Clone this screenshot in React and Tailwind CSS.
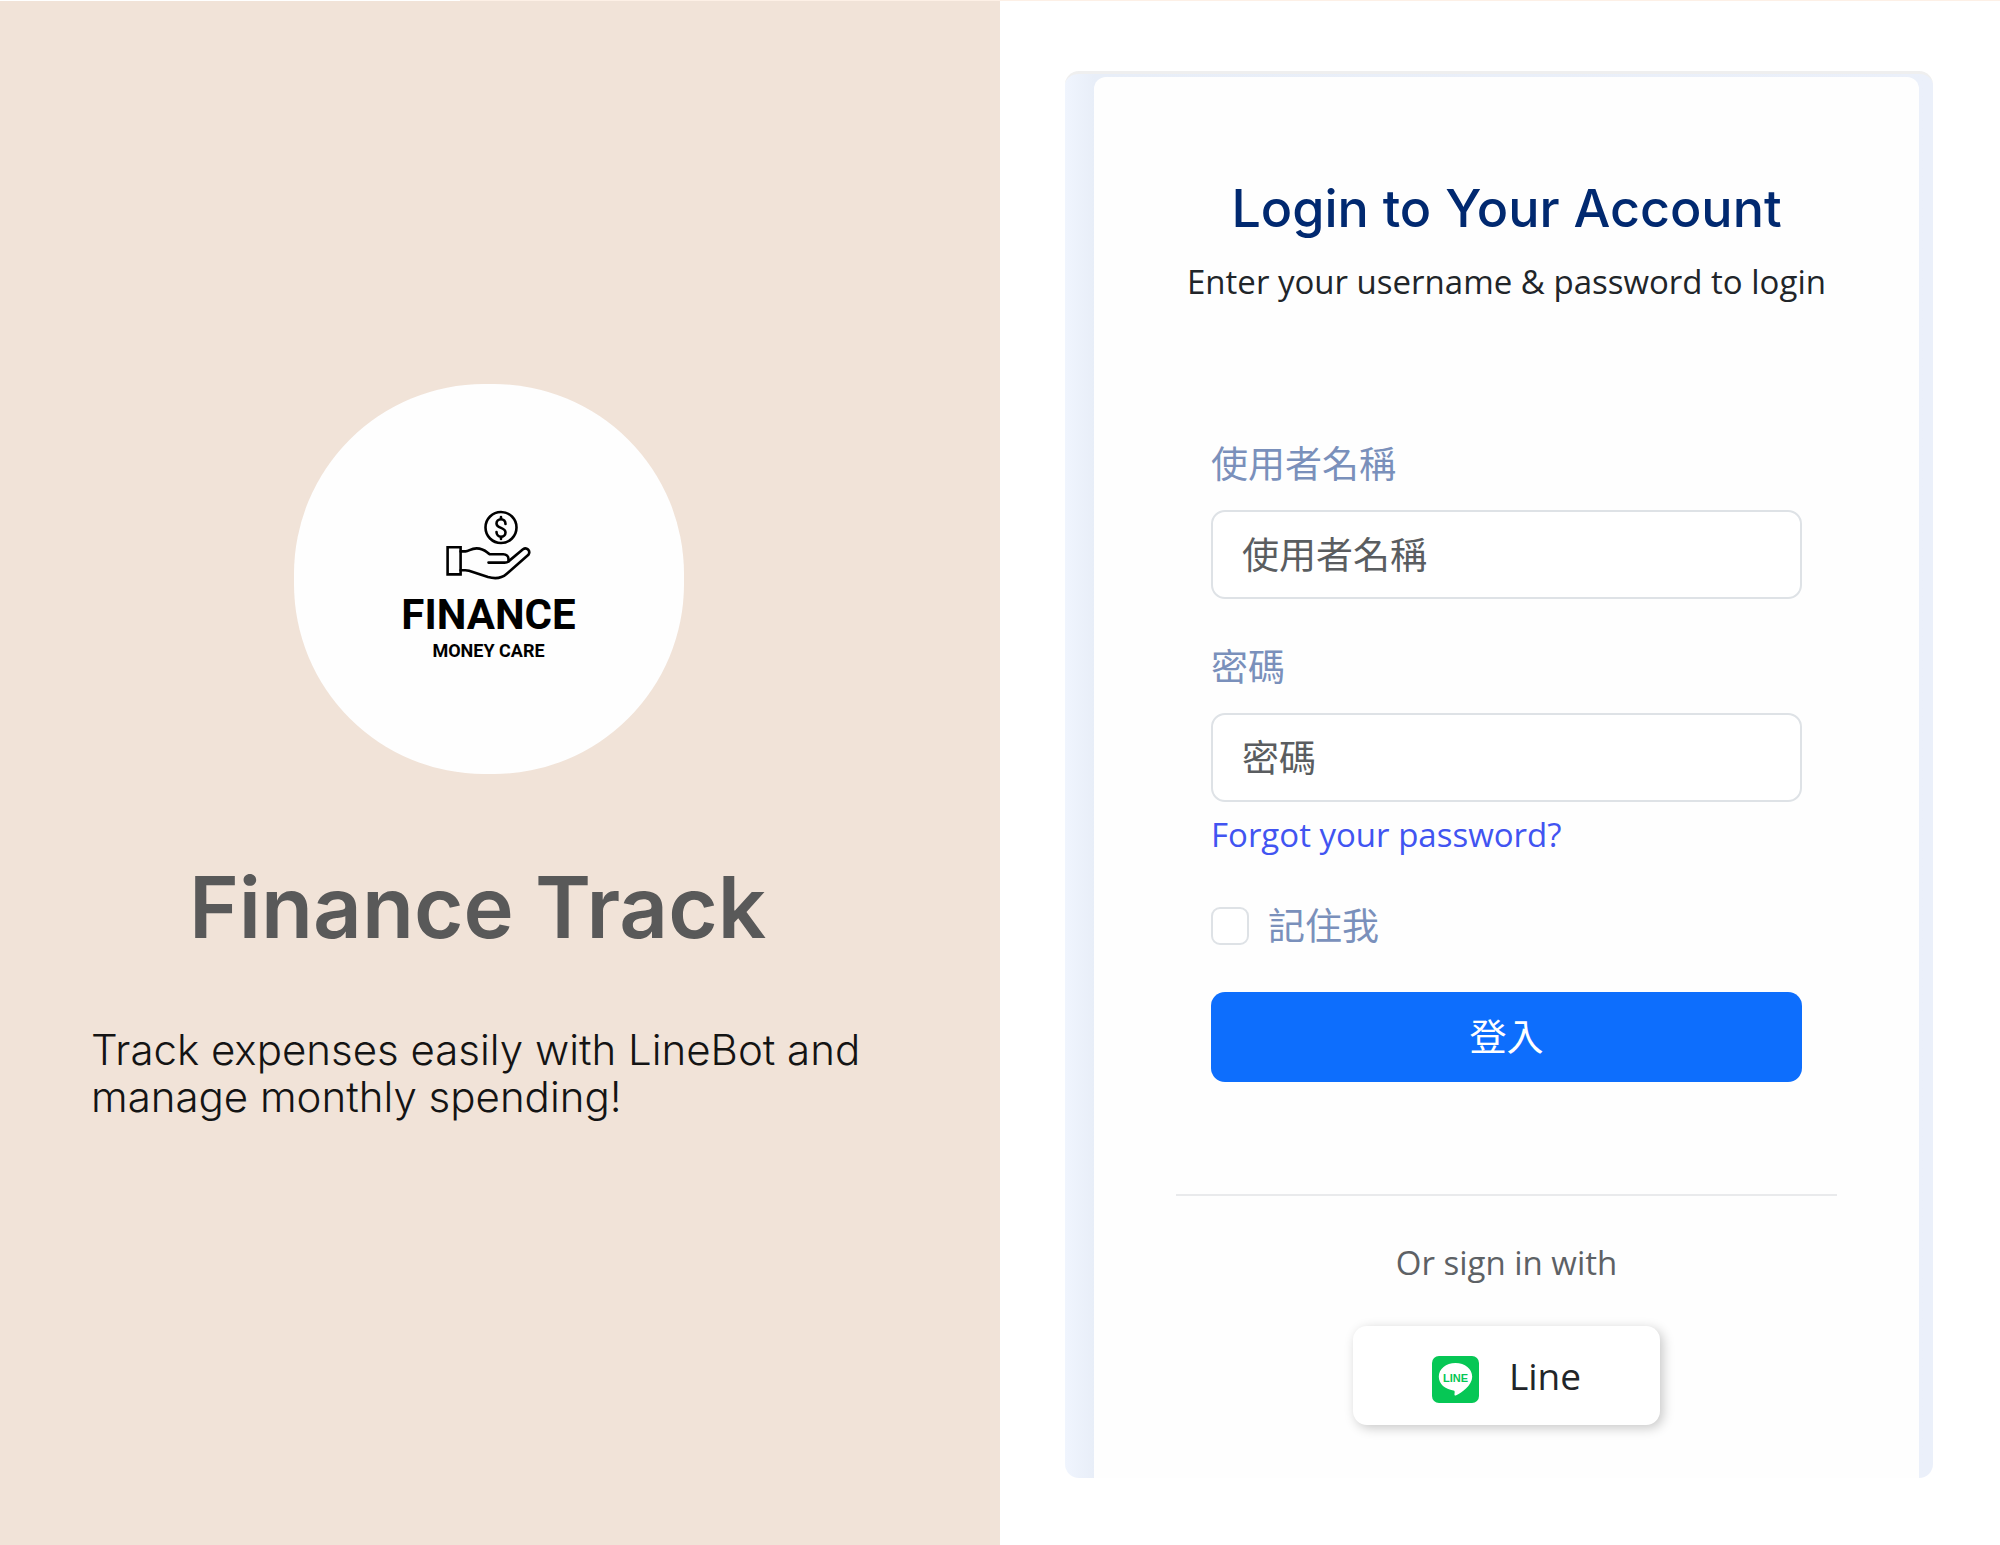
import React from "react";

const cjk = "font-['Open_Sans','Noto_Sans_CJK_TC',sans-serif]";

function HandCoinIcon() {
  return (
    <svg
      className="h-[70px] w-[86px]"
      viewBox="0 0 86 70"
      fill="none"
      stroke="#000"
      strokeWidth="2.6"
      strokeLinejoin="round"
      strokeLinecap="round"
      aria-hidden="true"
    >
      <circle cx="55" cy="17.500" r="15.5" />
      <path d="M59.5 14c0-3-2-4.800-4.500-4.800s-4.500 1.700-4.500 4.200c0 5.200 9 3.800 9 9 0 2.500-2 4.300-4.500 4.300s-4.500-1.800-4.500-4.700" />
      <path d="M55 7v2M55 27v2" />
      <path d="M1.600 37.200h13v27.200h-13z" strokeLinejoin="miter" />
      <path d="M14.600 41.400h5c3.500 0 5-3 11-3 7 0 9.400 3.200 13 5.800h13.600c3.400 0 5.300 2.300 5.300 5v2.200c-1 .9-2.400 1.200-4 1.200H42.500" />
      <path d="M62.500 51.400 77 39.200c3.600-2.600 8 1.600 5.400 5.600L60.500 64c-5 4.400-12 4.800-18.500 3L23 60.700c-1.400-.4-2.400-.5-3.800-.5h-4.600" />
    </svg>
  );
}

function LineLogo() {
  return (
    <svg className="mt-[8px] h-[47px] w-[47px]" viewBox="0 0 47 47" aria-hidden="true">
      <rect width="47" height="47" rx="7" fill="#06c755" />
      <path
        d="M23.500 7C14 7 6.800 13 6.800 20.800c0 7.200 6.400 12.600 14.600 13.600 1.500.3 1.400 1.200 1.100 3.400-.2 1.400.3 2.200 1.700 1.500C29 37 40.200 29.800 40.200 20.800 40.200 13 33 7 23.500 7z"
        fill="#fff"
      />
      <text
        x="23.500"
        y="25.500"
        textAnchor="middle"
        fontFamily="Liberation Sans, sans-serif"
        fontWeight="700"
        fontSize="11"
        fill="#06c755"
      >
        LINE
      </text>
    </svg>
  );
}

function Field({ id, label, type }) {
  return (
    <div>
      <label htmlFor={id} className="block text-[37px] leading-[56px] text-[#7a90bb]">
        {label}
      </label>
      <input
        id={id}
        type={type}
        placeholder={label}
        className="mt-[18px] block h-[89px] w-full rounded-[14px] border-2 border-[#dee2e6] bg-white px-[29px] text-[37px] text-[#212529] placeholder:text-[#5a5d60]"
      />
    </div>
  );
}

function Intro() {
  return (
    <section className="flex w-1/2 flex-col items-center bg-[#f1e3d8] pl-[91px] pr-[114px] pt-[383px] font-['Inter',sans-serif]">
      <div className="flex h-[390px] w-[390px] flex-col items-center rounded-[190px] bg-[#fefefe] pt-[126px] font-['Roboto',sans-serif] font-bold text-black">
        <HandCoinIcon />
        <span className="mt-[11px] text-[42px] leading-[48px]">FINANCE</span>
        <span className="text-[18px] leading-[24px]">MONEY CARE</span>
      </div>
      <h1 className="mt-[84px] w-full pr-[22px] text-center text-[85px] font-semibold leading-[100px] text-[#595959]">
        Finance Track
      </h1>
      <p className="mt-[68px] w-full text-[42px] font-light leading-[47px] text-[#141414]">
        Track expenses easily with LineBot and manage monthly spending!
      </p>
    </section>
  );
}

function Login() {
  return (
    <section className="flex-1 bg-white pb-[67px] pl-[65px] pr-[67px] pt-[70px]">
      <div className="flex h-full flex-col rounded-[14px] border-t-[3px] border-[#efefef] bg-[linear-gradient(90deg,#f0f5fe_0px,#e8eef8_29px,#ebf0fa_100%)] pl-[29px] pr-[14px] pt-[3px]">
        <form
          className={`flex flex-1 flex-col rounded-t-[12px] bg-[#fefefe] px-[82px] pt-[94px] ${cjk}`}
          onSubmit={(e) => e.preventDefault()}
        >
          <h2 className="text-center font-['Inter',sans-serif] text-[52px] font-medium leading-[76px] text-[#012970]">
            Login to Your Account
          </h2>
          <p className="mt-[2px] text-center text-[33px] leading-[66px] text-[#212529]">
            Enter your username &amp; password to login
          </p>
          <div className="flex flex-col px-[35px] pt-[121px]">
            <Field id="username" label="使用者名稱" type="text" />
            <div className="mt-[40px]">
              <Field id="password" label="密碼" type="password" />
            </div>
            <a href="#forgot" className="mt-[7px] self-start text-[33px] leading-[52px] text-[#4154f1]">
              Forgot your password?
            </a>
            <div className="mt-[37px] flex items-center gap-[19px]">
              <input
                id="remember"
                type="checkbox"
                className="h-[38px] w-[38px] appearance-none rounded-[9px] border-2 border-[#dee2e6] bg-white checked:bg-[#0d6efd]"
              />
              <label htmlFor="remember" className="text-[37px] leading-[56px] text-[#7a90bb]">
                記住我
              </label>
            </div>
            <button
              type="submit"
              className="mt-[38px] h-[90px] rounded-[14px] bg-[#0d6efd] text-[37px] text-white"
            >
              登入
            </button>
          </div>
          <hr className="mt-[112px] border-t-2 border-[#e9eaec]" />
          <p className="mt-[41px] text-center text-[33px] leading-[52px] text-[#5d6165]">
            Or sign in with
          </p>
          <button
            type="button"
            className="mt-[37px] flex h-[99px] w-[307px] items-center justify-center gap-[30px] self-center rounded-[14px] bg-white text-[37px] text-[#212529] shadow-[3px_3px_12px_rgba(0,0,0,0.22)]"
          >
            <LineLogo />
            Line
          </button>
        </form>
      </div>
    </section>
  );
}

export default function App() {
  return (
    <div className="flex min-h-screen flex-col bg-white">
      <div className="h-px bg-[linear-gradient(90deg,#ffffff_23%,#fdf0e6_23%)]" />
      <main className="flex flex-1">
        <Intro />
        <Login />
      </main>
    </div>
  );
}
